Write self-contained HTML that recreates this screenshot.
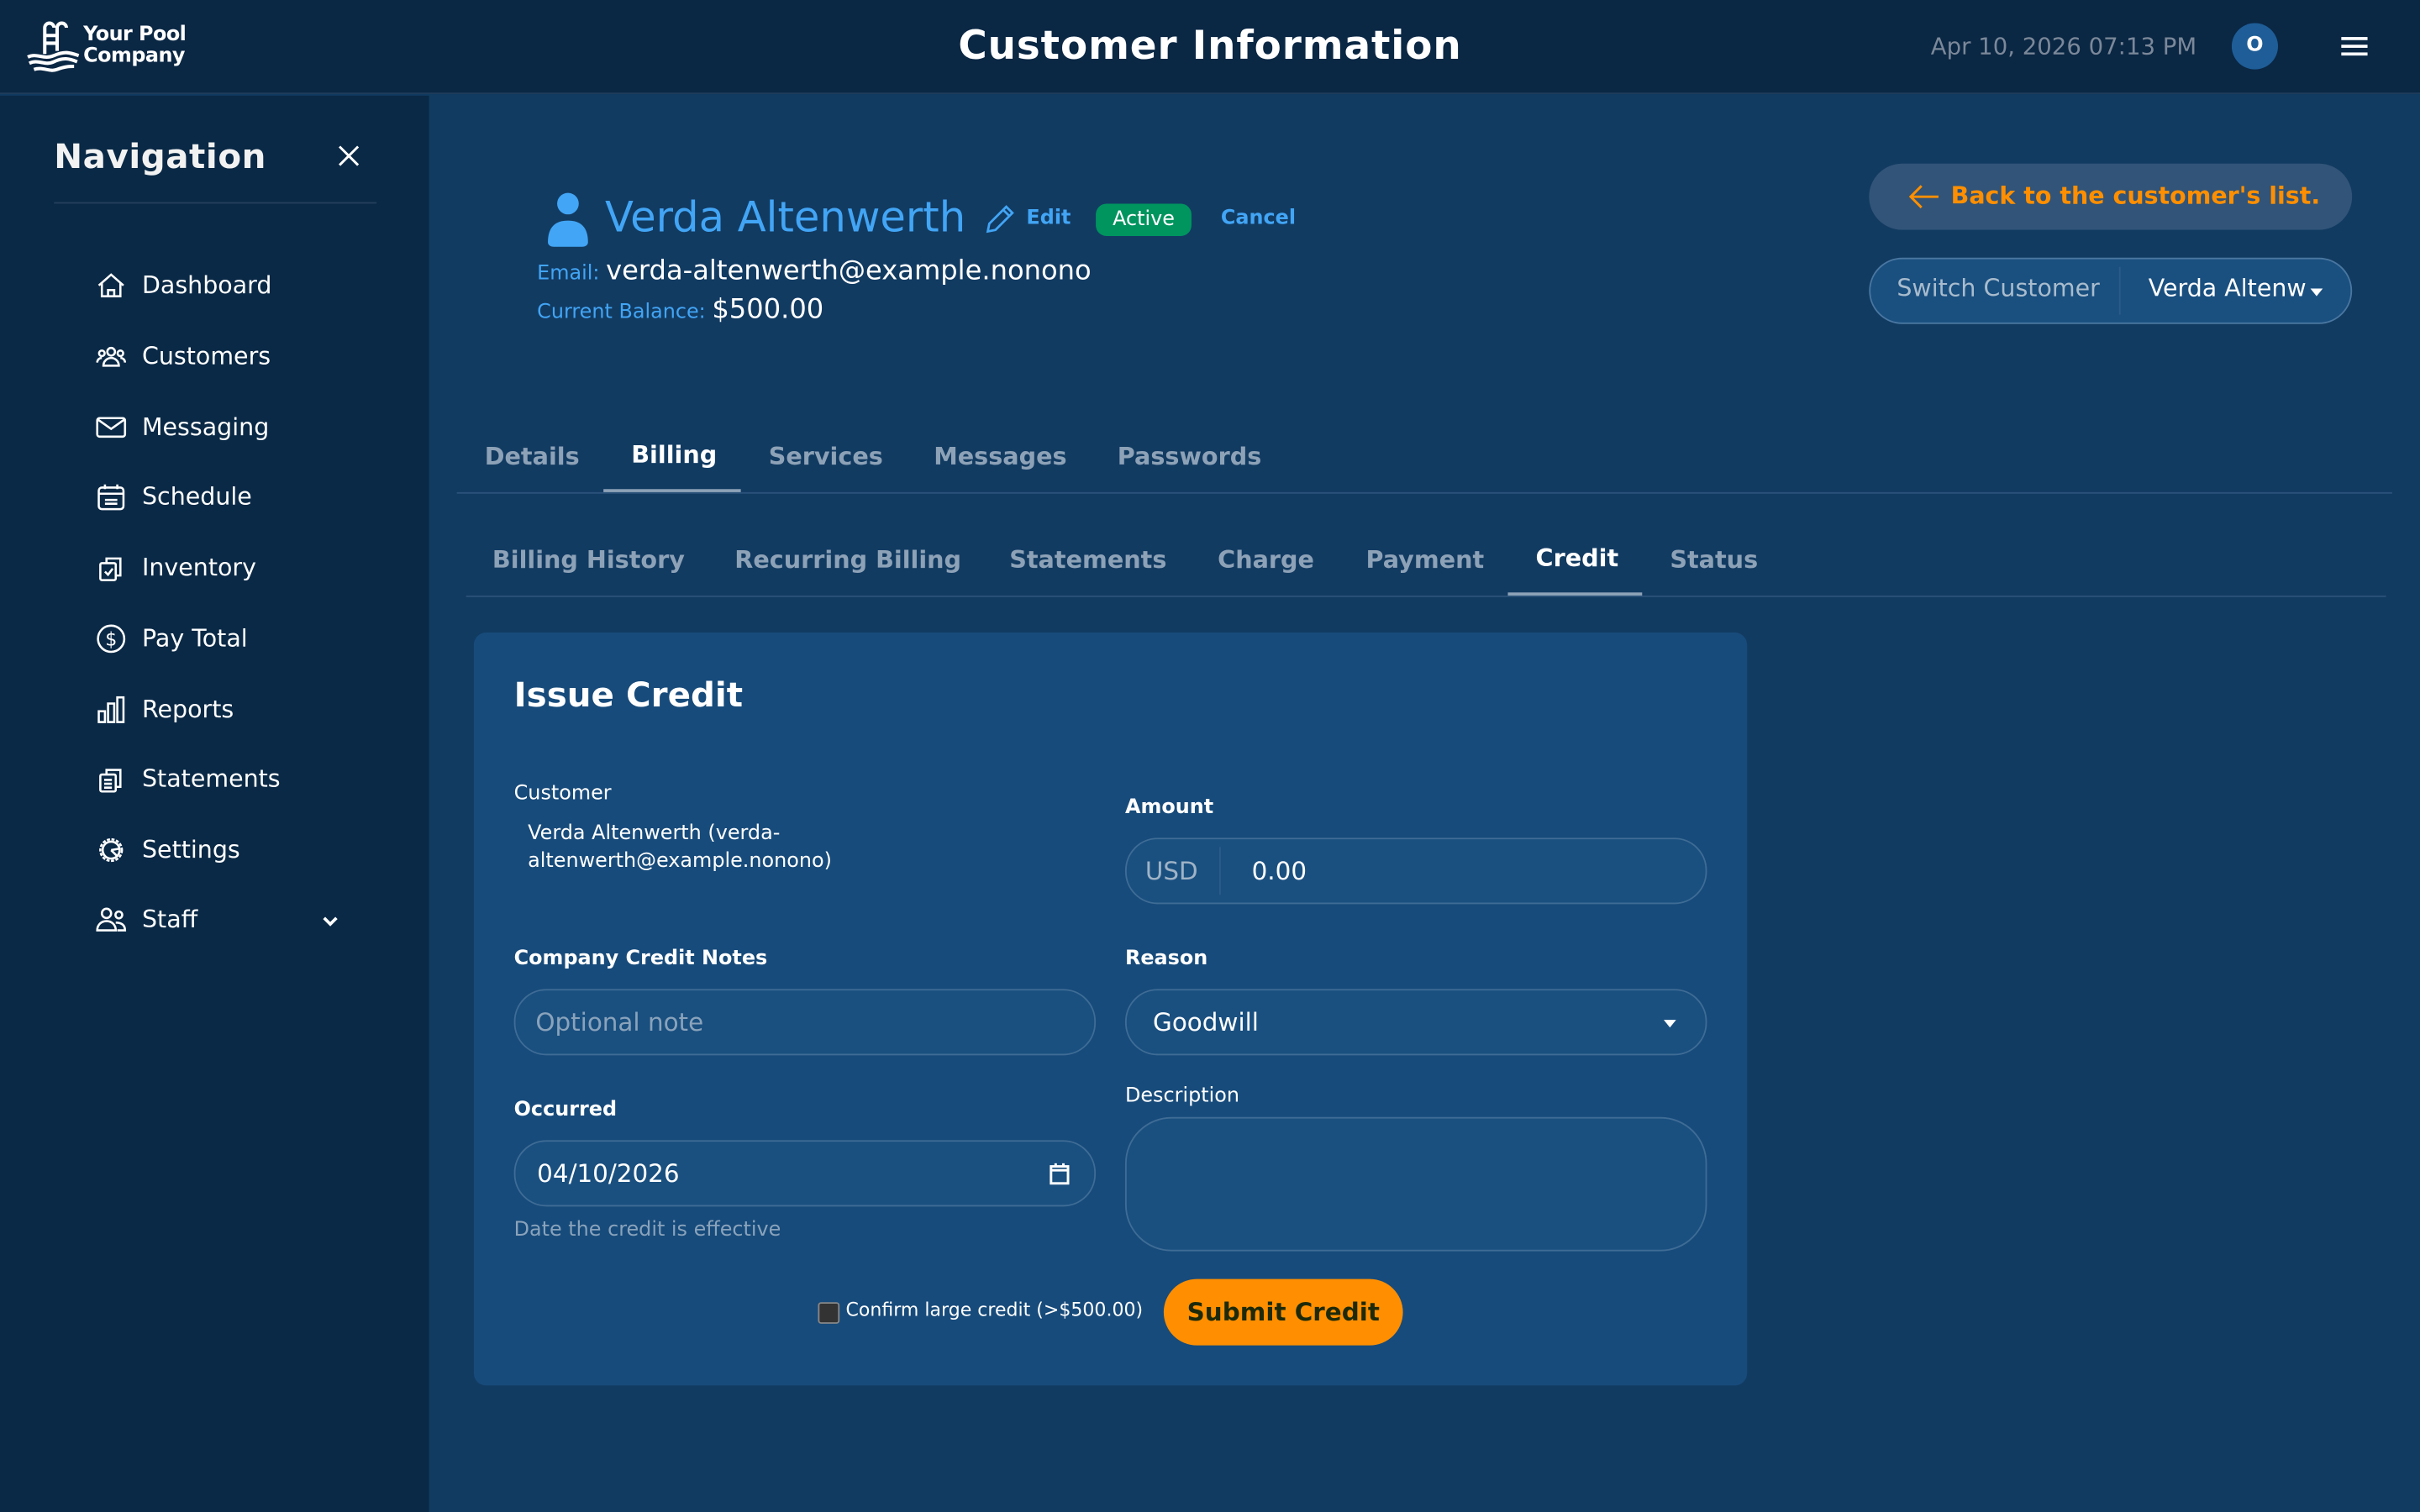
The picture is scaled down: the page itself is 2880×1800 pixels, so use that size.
<!DOCTYPE html>
<html><head><meta charset="utf-8"><style>
*{box-sizing:border-box;margin:0;padding:0}
html,body{width:2880px;height:1800px;overflow:hidden;background:#123b62}
#w{position:absolute;left:0;top:0;width:1568px;height:980px;transform:scale(1.836735);transform-origin:0 0;font-family:"DejaVu Sans","Liberation Sans",sans-serif;color:#fff;background:#123b62}
.a{position:absolute;white-space:nowrap}
.hdr{left:0;top:0;width:1568px;height:61px;background:#0a2744;border-bottom:1px solid #1f3d5c}
.side{left:0;top:62px;width:278px;height:918px;background:#0a2946}
.nav{left:62px;font-size:15.5px;display:flex;align-items:center;gap:10px}
.nav svg{width:20px;height:20px;fill:none;stroke:#fff;stroke-width:1.4}
.tab{font-size:15.6px;font-weight:bold;color:#8da2b7}
.lbl{font-size:13px;font-weight:bold}
.inp{border:1px solid #3f6c95;background:#1a5080;border-radius:21px;height:43px}
</style></head><body><div id="w">
<div class="a hdr"></div>
<svg class="a" style="left:17px;top:13px" width="36" height="36" viewBox="0 0 36 36" fill="none" stroke="#fff" stroke-width="2.2"><path d="M12 22V5a3 3 0 0 1 6 0M20 20V5a3 3 0 0 1 6 0M12 10h8M12 15h8"/><path d="M1 24c6-3 10 2 17-1s10-2 16 0M2 28c6-3 10 2 16-1s10-2 15 0M5 32c6-2 10 2 15 0s8-2 11-2"/></svg>
<div class="a" style="left:54px;top:16px;font-size:13px;font-weight:bold;line-height:14px;letter-spacing:-.3px">Your Pool<br>Company</div>
<div class="a" style="left:0;width:1568px;text-align:center;top:15px;font-size:25.5px;font-weight:bold;letter-spacing:.5px">Customer Information</div>
<div class="a" style="left:1251px;top:21px;font-size:15px;color:#7b8899">Apr 10, 2026 07:13 PM</div>
<div class="a" style="left:1446px;top:15px;width:30px;height:30px;border-radius:50%;background:#1e5d97;text-align:center;line-height:30px;font-size:13px;font-weight:bold">O</div>
<div class="a" style="left:1517px;top:24px;width:17px;height:2px;background:#fff;box-shadow:0 5px 0 #fff,0 10px 0 #fff"></div>

<div class="a side"></div>
<div class="a" style="left:35px;top:90px;font-size:22px;font-weight:bold;letter-spacing:.3px;color:#f2f2f2">Navigation</div>
<svg class="a" style="left:219px;top:94px" width="14" height="14" stroke="#fff" stroke-width="1.6"><path d="M1 1l12 12M13 1L1 13"/></svg>
<div class="a" style="left:35px;top:131px;width:209px;height:1px;background:#243f5c"></div>

<div class="a nav" style="top:175px"><svg viewBox="0 0 20 20"><path d="M2 10L10 3l8 7M4 8.5V17h12V8.5M8 17v-4h4v4"/></svg>Dashboard</div>
<div class="a nav" style="top:221px"><svg viewBox="0 0 20 20"><circle cx="10" cy="7" r="2.5"/><circle cx="4" cy="8" r="1.8"/><circle cx="16" cy="8" r="1.8"/><path d="M5 16c0-3 2.5-5 5-5s5 2 5 5zM1 14c0-2 1.5-3 3-3M19 14c0-2-1.5-3-3-3"/></svg>Customers</div>
<div class="a nav" style="top:267px"><svg viewBox="0 0 20 20"><rect x="1" y="4" width="18" height="12" rx="1.5"/><path d="M1.5 5l8.5 6 8.5-6"/></svg>Messaging</div>
<div class="a nav" style="top:312px"><svg viewBox="0 0 20 20"><rect x="2" y="4" width="16" height="14" rx="2"/><path d="M2 8h16M6 2v3M14 2v3M6 12h8M6 14.5h8"/></svg>Schedule</div>
<div class="a nav" style="top:358px"><svg viewBox="0 0 20 20"><rect x="3" y="7" width="10" height="11" rx="1"/><path d="M7 7V4h9v11h-3M6 12.5l2 2 3-4"/></svg>Inventory</div>
<div class="a nav" style="top:404px"><svg viewBox="0 0 20 20"><circle cx="10" cy="10" r="8.5"/><text x="10" y="14.5" font-size="12" text-anchor="middle" fill="#fff" stroke="none" font-family="DejaVu Sans">$</text></svg>Pay Total</div>
<div class="a nav" style="top:450px"><svg viewBox="0 0 20 20"><rect x="2" y="11" width="4" height="7"/><rect x="8" y="6" width="4" height="12"/><rect x="14" y="2" width="4" height="16"/></svg>Reports</div>
<div class="a nav" style="top:495px"><svg viewBox="0 0 20 20"><rect x="3" y="7" width="10" height="11" rx="1"/><path d="M7 7V4h9v11h-3M5.5 10.5h5M5.5 13h5M5.5 15.5h5"/></svg>Statements</div>
<div class="a nav" style="top:541px"><svg viewBox="0 0 20 20"><circle cx="10" cy="10" r="7" stroke-dasharray="2 1"/><circle cx="10" cy="10" r="5.5"/><path d="M10 10l5.5-1M10 10l4 4"/></svg>Settings</div>
<div class="a nav" style="top:586px"><svg viewBox="0 0 20 20"><circle cx="7" cy="6" r="3"/><circle cx="15" cy="7" r="2.2"/><path d="M1 17c0-4 3-6 6-6s6 2 6 6zM13 12c3 0 6 1 6 5h-5"/></svg>Staff</div>
<svg class="a" style="left:209px;top:593px" width="10" height="8" stroke="#fff" stroke-width="2" fill="none"><path d="M1 2l4 4 4-4"/></svg>

<svg class="a" style="left:353px;top:124px" width="30" height="36" viewBox="0 0 30 36" fill="#42a5f5"><circle cx="15" cy="8" r="7"/><path d="M2 33c0-10 5-14 13-14s13 4 13 14c0 2-2 3-4 3H6c-2 0-4-1-4-3z"/></svg>
<div class="a" style="left:392px;top:126px;font-size:27px;color:#42a5f5">Verda Altenwerth</div>
<svg class="a" style="left:638px;top:132px" width="20" height="20" fill="none" stroke="#42a5f5" stroke-width="1.5"><path d="M2 18l1-5L14 2l4 4L7 17zM12 4l4 4"/></svg>
<div class="a" style="left:665px;top:134px;font-size:13px;font-weight:bold;color:#42a5f5">Edit</div>
<div class="a" style="left:710px;top:132px;width:62px;height:21px;border-radius:7px;background:#00945f;font-size:13px;text-align:center;line-height:21px">Active</div>
<div class="a" style="left:791px;top:134px;font-size:13px;font-weight:bold;color:#42a5f5">Cancel</div>
<div class="a" style="left:348px;top:164px;font-size:13px;color:#42a5f5;line-height:24px">Email: <span style="font-size:17.5px;color:#fff">verda-altenwerth@example.nonono</span></div>
<div class="a" style="left:348px;top:189px;font-size:13px;color:#42a5f5;line-height:24px">Current Balance: <span style="font-size:17.5px;color:#fff">$500.00</span></div>

<div class="a" style="left:1211px;top:106px;width:313px;height:43px;border-radius:22px;background:#315478;color:#ff8f00;font-size:15.5px;font-weight:bold;line-height:42px;padding-left:53px">Back to the customer's list.</div>
<svg class="a" style="left:1236px;top:119px" width="22" height="17" fill="none" stroke="#ff8f00" stroke-width="1.6"><path d="M20 8.5H2M9 1.5l-7 7 7 7"/></svg>
<div class="a" style="left:1211px;top:167px;width:313px;height:43px;border-radius:22px;background:#1a5080;border:1px solid #4a77a0"></div>
<div class="a" style="left:1373px;top:173px;width:1px;height:31px;background:#2d5b86"></div>
<div class="a" style="left:1229px;top:178px;font-size:15.5px;color:#a9bccd">Switch Customer</div>
<div class="a" style="left:1392px;top:178px;font-size:15.5px">Verda Altenw</div>
<div class="a" style="left:1497px;top:187px;border:4px solid transparent;border-top:5px solid #fff"></div>

<div class="a tab" style="left:314px;top:287px">Details</div>
<div class="a tab" style="left:409px;top:286px;color:#fff">Billing</div>
<div class="a tab" style="left:498px;top:287px">Services</div>
<div class="a tab" style="left:605px;top:287px">Messages</div>
<div class="a tab" style="left:724px;top:287px">Passwords</div>
<div class="a" style="left:296px;top:319px;width:1254px;height:1px;background:#2b527a"></div>
<div class="a" style="left:391px;top:317px;width:89px;height:2px;background:#8da2b7"></div>

<div class="a tab" style="left:319px;top:354px">Billing History</div>
<div class="a tab" style="left:476px;top:354px">Recurring Billing</div>
<div class="a tab" style="left:654px;top:354px">Statements</div>
<div class="a tab" style="left:789px;top:354px">Charge</div>
<div class="a tab" style="left:885px;top:354px">Payment</div>
<div class="a tab" style="left:995px;top:353px;color:#fff">Credit</div>
<div class="a tab" style="left:1082px;top:354px">Status</div>
<div class="a" style="left:302px;top:386px;width:1244px;height:1px;background:#2b527a"></div>
<div class="a" style="left:977px;top:384px;width:87px;height:2px;background:#8da2b7"></div>

<div class="a" style="left:307px;top:410px;width:825px;height:488px;border-radius:8px;background:#174b7b"></div>
<div class="a" style="left:333px;top:439px;font-size:22px;font-weight:bold">Issue Credit</div>
<div class="a" style="left:333px;top:507px;font-size:13px">Customer</div>
<div class="a" style="left:342px;top:532px;font-size:13px;line-height:18px">Verda Altenwerth (verda-<br>altenwerth@example.nonono)</div>
<div class="a lbl" style="left:729px;top:516px">Amount</div>
<div class="a inp" style="left:729px;top:543px;width:377px"></div>
<div class="a" style="left:790px;top:549px;width:1px;height:31px;background:#2d5b86"></div>
<div class="a" style="left:742px;top:555px;font-size:16px;color:#9fb3c6">USD</div>
<div class="a" style="left:811px;top:555px;font-size:16px">0.00</div>

<div class="a lbl" style="left:333px;top:614px">Company Credit Notes</div>
<div class="a inp" style="left:333px;top:641px;width:377px"></div>
<div class="a" style="left:347px;top:653px;font-size:16px;color:#8aa3bb">Optional note</div>
<div class="a lbl" style="left:729px;top:614px">Reason</div>
<div class="a inp" style="left:729px;top:641px;width:377px"></div>
<div class="a" style="left:747px;top:653px;font-size:16px">Goodwill</div>
<div class="a" style="left:1078px;top:661px;border:4px solid transparent;border-top:5px solid #fff"></div>

<div class="a lbl" style="left:333px;top:712px">Occurred</div>
<div class="a inp" style="left:333px;top:739px;width:377px"></div>
<div class="a" style="left:348px;top:751px;font-size:16px">04/10/2026</div>
<svg class="a" style="left:680px;top:753px" width="13" height="15" fill="none" stroke="#fff" stroke-width="1.6"><rect x="1" y="3" width="11" height="11"/><path d="M1 5.5h11M4 1v2M9 1v2" /></svg>
<div class="a" style="left:333px;top:790px;font-size:13px;color:#8aa3bb">Date the credit is effective</div>
<div class="a" style="left:729px;top:703px;font-size:13px">Description</div>
<div class="a" style="left:729px;top:724px;width:377px;height:87px;border:1px solid #3f6c95;background:#1a5080;border-radius:30px"></div>

<div class="a" style="left:530px;top:844px;width:14px;height:14px;border:1px solid #888;border-radius:2px;background:#333"></div>
<div class="a" style="left:548px;top:842px;font-size:12px">Confirm large credit (&gt;$500.00)</div>
<div class="a" style="left:754px;top:829px;width:155px;height:43px;border-radius:22px;background:#ff8f00;color:#1d2a0a;font-size:16px;font-weight:bold;text-align:center;line-height:43px">Submit Credit</div>
</div></body></html>
